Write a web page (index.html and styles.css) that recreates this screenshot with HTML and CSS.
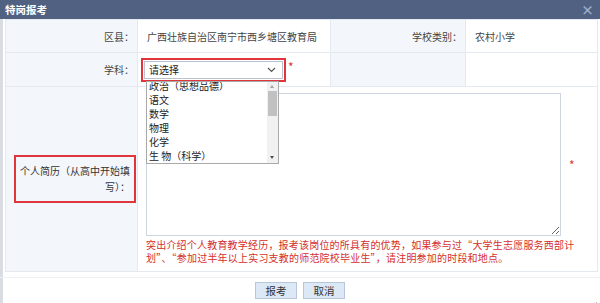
FILE: index.html
```html
<!DOCTYPE html>
<html lang="zh-CN">
<head>
  <meta charset="UTF-8" />
  <title>特岗报考</title>
  <link rel="stylesheet" href="styles.css">
</head>
<body>
  <div class="dialog">
    <div class="dialog-title">
      <span>特岗报考</span>
      <span class="close">&times;</span>
    </div>

    <table class="form-table">
      <colgroup>
        <col class="c1"><col class="c2"><col class="c3"><col class="c4">
      </colgroup>
      <tr class="row-1">
        <th>区县：</th>
        <td>广西壮族自治区南宁市西乡塘区教育局</td>
        <th>学校类别：</th>
        <td>农村小学</td>
      </tr>
      <tr class="row-2">
        <th>学科：</th>
        <td>
          <div class="select-line">
            <div class="mark-box select-box">
              <div class="fake-select">
                <span>请选择</span>
                <svg class="chev" width="9" height="6" viewBox="0 0 9 6"><path d="M1 1 L4.5 4.5 L8 1" fill="none" stroke="#555" stroke-width="1.2"/></svg>
              </div>
              <div class="drop-list">
                <ul>
                  <li>政治（思想品德）</li>
                  <li>语文</li>
                  <li>数学</li>
                  <li>物理</li>
                  <li>化学</li>
                  <li>生 物（科学）</li>
                </ul>
                <div class="scroll">
                  <span class="arr up"></span>
                  <span class="thumb"></span>
                  <span class="arr down"></span>
                </div>
              </div>
            </div>
            <span class="req req-top">*</span>
          </div>
        </td>
        <th></th>
        <td></td>
      </tr>
      <tr class="row-3">
        <th class="resume-label">
          <div class="mark-box label-box">个人简历（从高中开始填写）：</div>
        </th>
        <td colspan="3">
          <div class="area-line">
            <textarea></textarea>
            <span class="req">*</span>
          </div>
          <p class="hint">突出介绍个人教育教学经历，报考该岗位的所具有的优势，如果参与过“大学生志愿服务西部计<br>划”、“参加过半年以上实习支教的师范院校毕业生”，请注明参加的时段和地点。</p>
        </td>
      </tr>
    </table>

    <div class="dialog-foot">
      <button>报考</button>
      <button>取消</button>
      <svg class="grip" width="8" height="8" viewBox="0 0 8 8"><path d="M7 1 L1 7 M7 4 L4 7" stroke="#aab" stroke-width="1"/></svg>
    </div>
  </div>
</body>
</html>
```

FILE: styles.css
```css
html, body {
  margin: 0;
  width: 600px;
  height: 303px;
  overflow: hidden;
  background: #fff;
}
body {
  font-family: "Noto Sans CJK SC", "Noto Sans", sans-serif;
  font-size: 10px;
  color: #333;
}
.dialog {
  height: 303px;
  border-left: 3px solid #d9dde3;
  box-sizing: border-box;
  position: relative;
}
.dialog-title {
  height: 19px;
  margin-left: -3px;
  background: #506182;
  color: #fff;
  font-weight: bold;
  font-size: 10.5px;
  line-height: 19px;
  padding: 0 6px 0 5px;
  display: flex;
  justify-content: space-between;
}
.close { color: #9fb0cc; font-size: 13px; font-weight: bold; }

.form-table {
  margin-left: 2px;
  width: 592px;
  border-collapse: collapse;
  table-layout: fixed;
}
.c1 { width: 132px; }
.c2 { width: 193px; }
.c3 { width: 135px; }
.c4 { width: 132px; }
.form-table th, .form-table td {
  border: 1px solid #e4e9ef;
  padding: 0;
}
.form-table th {
  background: #f3f7fb;
  font-weight: normal;
  text-align: right;
  padding-right: 3px;
  color: #444;
}
.form-table td { padding-left: 8px; color: #444; }
.row-1 { height: 33px; }
.row-1 td { padding-left: 9px; }
.row-2 { height: 34px; }
.row-3 { height: 185px; }

.select-line { display: flex; align-items: flex-start; margin-left: -5px; }
.mark-box { border: 2px solid #e0353c; }
.select-box {
  position: relative;
  width: 139px;
  padding: 1px;
}
.fake-select {
  height: 16px;
  border: 1px solid #b9c3cf;
  background: #fff;
  display: flex;
  align-items: center;
  justify-content: space-between;
  padding: 0 6px 0 4px;
  color: #222;
}
.req { color: #d9363b; font-size: 12px; margin-left: 6px; }
.req-top { line-height: 14px; margin-left: 2px; margin-top: 2px; }

.drop-list {
  position: absolute;
  top: 21px;
  left: 3px;
  width: 131px;
  height: 81px;
  border: 1px solid #a9a9a9;
  background: #fff;
  overflow: hidden;
  z-index: 2;
}
.drop-list ul {
  list-style: none;
  margin: -3px 0 0;
  padding: 0 0 0 2px;
}
.drop-list li { line-height: 14.1px; color: #222; }
.scroll {
  position: absolute;
  top: 0; right: 0; bottom: 0;
  width: 11px;
  background: #f1f1f1;
}
.arr { position: absolute; left: 3px; width: 0; height: 0; border-left: 2.5px solid transparent; border-right: 2.5px solid transparent; }
.arr.up { top: 3px; border-bottom: 3px solid #a3a3a3; }
.arr.down { bottom: 4px; border-top: 3px solid #505050; }
.thumb { position: absolute; left: 1px; right: 1px; top: 9px; height: 25px; background: #c1c1c1; }

.resume-label { padding: 0 1px 0 8px !important; vertical-align: middle; }
.label-box {
  padding: 6px 4px 6px 0;
  line-height: 16px;
  text-align: right;
  color: #333;
}

.row-3 td { vertical-align: top; padding-top: 6px; }
.area-line { display: flex; align-items: center; }
textarea {
  width: 415px;
  height: 143px;
  box-sizing: border-box;
  border: 1px solid #cdd7e1;
  resize: both;
  margin: 0;
  padding: 3px;
  font: inherit;
}
.area-line .req { margin-left: 8px; }
.hint {
  margin: 2px 0 0;
  width: 440px;
  letter-spacing: 0.2px;
  line-height: 13px;
  color: #d5302b;
}

.dialog-foot {
  margin-top: 5px;
  border-top: 1px solid #eef1f4;
  padding-top: 4px;
  display: flex;
  justify-content: center;
  gap: 6px;
  margin-left: -3px;
  position: relative;
}
.dialog-foot button {
  width: 42px;
  height: 17px;
  padding: 0;
  border: 1px solid #b7c6d8;
  background: #dce8f6;
  color: #333;
  font: inherit;
  font-size: 10.5px;
}
.grip { position: absolute; right: 2px; bottom: -10px; }
```
